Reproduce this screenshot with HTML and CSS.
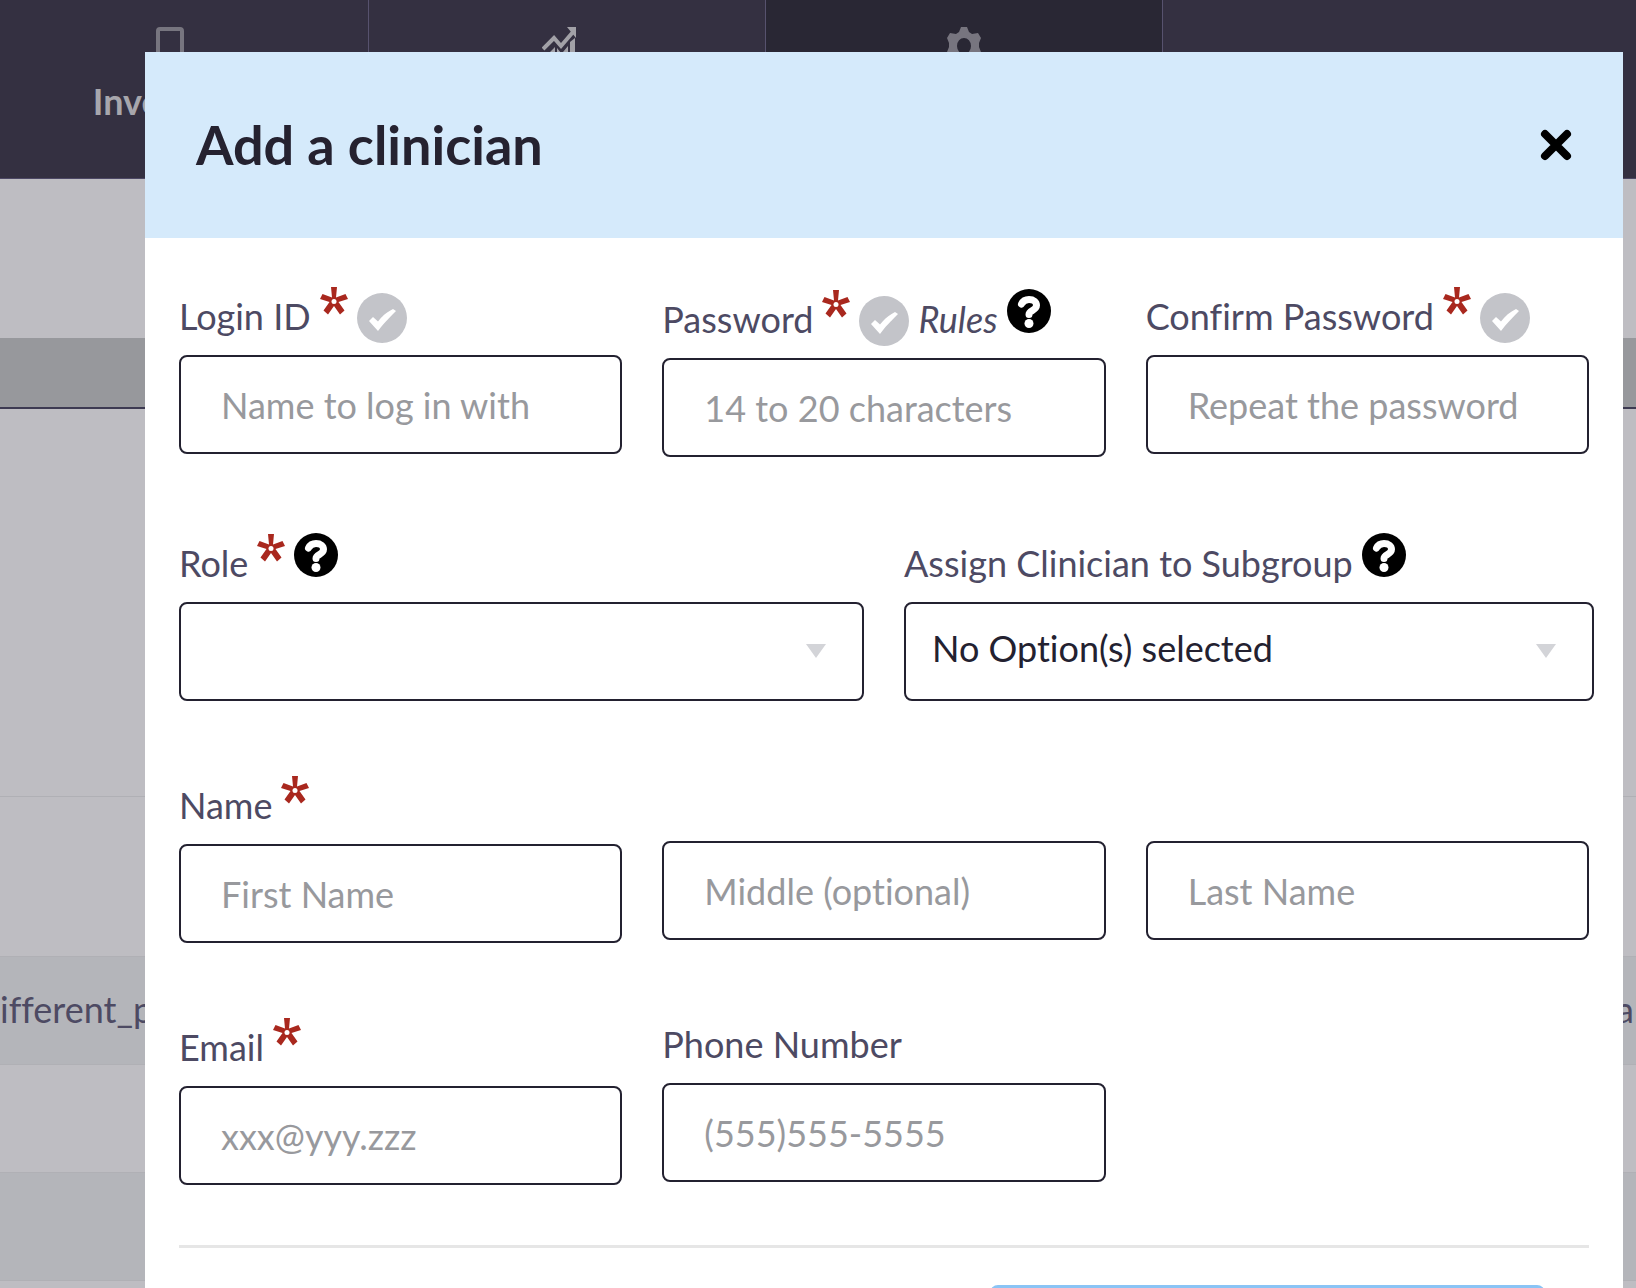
FILE: index.html
```html
<!DOCTYPE html>
<html lang="en">

<head>
    <meta charset="UTF-8" />
    <meta name="viewport" content="width=device-width, initial-scale=1.0" />
    <title>Add a clinician</title>
    <link rel="stylesheet" href="styles.css">
</head>

<body>
    <!-- Shared icons -->
    <svg class="sprite" aria-hidden="true">
        <symbol id="star" viewBox="0 0 28 28">
            <path fill="#a9281e" d="M11 0h6l-1 10.500 9.500-3.500L28 12l-9.500 3 6 8.500-4.500 4L14 19l-6 8.500-4.500-4 6-8.500L0 12l2.500-5L12 10.500z" />
            <circle cx="14" cy="14.500" r="2.500" fill="#fff" />
        </symbol>
        <symbol id="check" viewBox="0 0 50 50">
            <circle cx="25" cy="25" r="25" fill="#c3c4c9" />
            <path fill="#fff" d="M12 28l4-4 5 4.500C25 23 30 19 36 16l3 2C33 24 26 31 21 38z" />
        </symbol>
        <symbol id="help" viewBox="0 0 44 44">
            <circle cx="22" cy="22" r="22" fill="#000" />
            <path fill="none" stroke="#fff" stroke-width="7" stroke-linecap="round" stroke-linejoin="round" d="M14.500 15C16 12 19 10.500 22 10.500c4.500 0 7.500 2.500 7.500 5.800 0 5.200-7.500 5-7.500 9.200" />
            <circle cx="22" cy="34.500" r="4.500" fill="#fff" />
        </symbol>
    </svg>

    <nav class="top-nav">
        <a href="#" class="nav-item">
            <svg class="nav-icon" viewBox="0 0 34 40" aria-hidden="true">
                <rect x="5" y="2" width="24" height="36" rx="2" fill="none" stroke="#77757f" stroke-width="4" />
            </svg>
            <span>Inventory</span>
        </a>
        <a href="#" class="nav-item" aria-label="Reports">
            <svg class="nav-icon wide" viewBox="0 0 50 40" aria-hidden="true">
                <path fill="none" stroke="#a2a1a7" stroke-width="4" d="M1 22L12 11l7 8L31 5" />
                <path fill="#a2a1a7" d="M25 0h9v11zM8 25l5-5v20H8zM15 21l4 5v14h-4zM21 25l5-6v21h-5zM28 15l5-4v29h-5z" />
            </svg>
        </a>
        <a href="#" class="nav-item active" aria-label="Settings">
            <svg class="nav-icon" viewBox="0 0 34 40" aria-hidden="true">
                <path fill="#77757f" fill-rule="evenodd" d="M14 0h6l2 5 3 2 6-1 3 5-2 5v4l2 5-3 5-6-1-3 2-2 5h-6l-2-5-3-2-6 1-3-5 2-5v-4l-2-5 3-5 6 1 3-2zM17 11a7 8 0 1 0 0 16 7 8 0 0 0 0-16z" />
            </svg>
        </a>
    </nav>

    <table class="clinician-table">
        <thead>
            <tr><th></th><th></th></tr>
        </thead>
        <tbody>
            <tr class="row-large"><td></td><td></td></tr>
            <tr class="row-medium"><td></td><td></td></tr>
            <tr class="shaded"><td>ifferent_p</td><td>al</td></tr>
            <tr><td></td><td></td></tr>
            <tr class="shaded"><td></td><td></td></tr>
            <tr><td></td><td></td></tr>
        </tbody>
    </table>

    <div class="overlay">
        <div class="modal" role="dialog" aria-labelledby="modal-title">
            <header class="modal-header">
                <h1 id="modal-title">Add a clinician</h1>
                <button type="button" class="close-btn" aria-label="Close">
                    <svg viewBox="0 0 32 32" aria-hidden="true">
                        <path stroke="#000" stroke-width="8" stroke-linecap="round" d="M5 5l22 22M27 5L5 27" />
                    </svg>
                </button>
            </header>

            <form class="modal-body">
                <div class="form-row account-row">
                    <div class="field">
                        <div class="label-line">
                            <label for="login">Login ID</label>
                            <svg class="star"><use href="#star" /></svg>
                            <svg class="check"><use href="#check" /></svg>
                        </div>
                        <input type="text" id="login" placeholder="Name to log in with">
                    </div>
                    <div class="field">
                        <div class="label-line tall">
                            <label for="password">Password</label>
                            <svg class="star"><use href="#star" /></svg>
                            <svg class="check"><use href="#check" /></svg>
                            <em>Rules</em>
                            <svg class="help"><use href="#help" /></svg>
                        </div>
                        <input type="password" id="password" placeholder="14 to 20 characters">
                    </div>
                    <div class="field">
                        <div class="label-line">
                            <label for="confirm">Confirm Password</label>
                            <svg class="star"><use href="#star" /></svg>
                            <svg class="check"><use href="#check" /></svg>
                        </div>
                        <input type="password" id="confirm" placeholder="Repeat the password">
                    </div>
                </div>

                <div class="form-row select-row">
                    <div class="field">
                        <div class="label-line">
                            <label for="role">Role</label>
                            <svg class="star"><use href="#star" /></svg>
                            <svg class="help"><use href="#help" /></svg>
                        </div>
                        <div class="select-box">
                            <select id="role">
                                <option></option>
                            </select>
                            <svg class="arrow" viewBox="0 0 20 14" aria-hidden="true"><path d="M0 0h20L10 14z" /></svg>
                        </div>
                    </div>
                    <div class="field">
                        <div class="label-line">
                            <label for="subgroup">Assign Clinician to Subgroup</label>
                            <svg class="help"><use href="#help" /></svg>
                        </div>
                        <div class="select-box">
                            <select id="subgroup">
                                <option>No Option(s) selected</option>
                            </select>
                            <svg class="arrow" viewBox="0 0 20 14" aria-hidden="true"><path d="M0 0h20L10 14z" /></svg>
                        </div>
                    </div>
                </div>

                <div class="form-row">
                    <div class="field">
                        <div class="label-line tall">
                            <label for="first">Name</label>
                            <svg class="star"><use href="#star" /></svg>
                        </div>
                        <input type="text" id="first" placeholder="First Name">
                    </div>
                    <div class="field">
                        <div class="label-line"></div>
                        <input type="text" placeholder="Middle (optional)" aria-label="Middle name">
                    </div>
                    <div class="field">
                        <div class="label-line"></div>
                        <input type="text" placeholder="Last Name" aria-label="Last name">
                    </div>
                </div>

                <div class="form-row">
                    <div class="field">
                        <div class="label-line tall">
                            <label for="email">Email</label>
                            <svg class="star"><use href="#star" /></svg>
                        </div>
                        <input type="email" id="email" placeholder="xxx@yyy.zzz">
                    </div>
                    <div class="field">
                        <div class="label-line">
                            <label for="phone">Phone Number</label>
                        </div>
                        <input type="tel" id="phone" placeholder="(555)555-5555">
                    </div>
                </div>

                <div class="form-actions">
                    <button type="submit" class="submit-btn" aria-label="Save"></button>
                </div>
            </form>
        </div>
    </div>
</body>

</html>
```

FILE: styles.css
```css
* {
    box-sizing: border-box;
}

body {
    margin: 0;
    height: 100vh;
    overflow: hidden;
    background-color: #bebdc2;
    font-family: Lato, sans-serif;
    font-size: 36px;
    line-height: 44px;
    font-variant-ligatures: none;
    color: #4d4a63;
}

.sprite {
    position: absolute;
    width: 0;
    height: 0;
}

/* Top navigation, scrolled a little to the left */
.top-nav {
    display: flex;
    height: 179px;
    margin-left: -28px;
    background-color: #343041;
    border-bottom: 1px solid #4d4865;
}

.nav-item {
    display: flex;
    flex-direction: column;
    align-items: center;
    gap: 12px;
    width: 397px;
    padding-top: 27px;
    border-right: 1px solid #57526e;
    color: #a7a6ac;
    font-weight: bold;
    text-decoration: none;
}

.nav-item.active {
    background-color: #292734;
}

.nav-icon {
    width: 34px;
    height: 40px;
}

.nav-icon.wide {
    width: 50px;
}

/* Table behind the modal */
.clinician-table {
    width: 100%;
    margin-top: 159px;
    border-collapse: collapse;
    table-layout: fixed;
    white-space: nowrap;
}

.clinician-table th {
    height: 70px;
    background-color: #97989c;
    border-bottom: 2px solid #3d3a52;
}

.clinician-table th:last-child {
    width: 20px;
}

.clinician-table td {
    height: 108px;
    padding: 0 0 2px;
    border-bottom: 1px solid #b0b0b5;
}

.clinician-table .row-large td {
    height: 388px;
}

.clinician-table .row-medium td {
    height: 160px;
}

.clinician-table .shaded {
    background-color: #b4b5ba;
}

/* Modal */
.overlay {
    position: fixed;
    inset: 0;
    padding: 52px 13px 0 145px;
    overflow: hidden;
}

.modal {
    background-color: #fff;
}

.modal-header {
    display: flex;
    justify-content: space-between;
    align-items: center;
    height: 186px;
    padding: 0 51px;
    background-color: #d5eafb;
}

.modal-header h1 {
    margin: 0;
    font-size: 54px;
    line-height: 64px;
    color: #252230;
}

.close-btn {
    width: 32px;
    height: 32px;
    padding: 0;
    border: none;
    background: none;
    cursor: pointer;
}

.close-btn svg {
    display: block;
}

/* Form */
.modal-body {
    padding: 49px 34px 60px;
}

.form-row {
    display: grid;
    grid-template-columns: repeat(3, 1fr);
    gap: 40px;
    margin-bottom: 72px;
}

.account-row {
    margin-bottom: 77px;
}

.select-row {
    grid-template-columns: 685fr 690fr;
    margin-right: -5px;
}

.label-line {
    display: flex;
    align-items: flex-end;
    gap: 9px;
    height: 56px;
    margin-bottom: 12px;
}

.label-line.tall {
    height: 59px;
}

.label-line label,
.label-line em {
    padding-bottom: 5px;
}

.star {
    width: 28px;
    height: 28px;
    margin-bottom: 28px;
}

.check {
    width: 50px;
    height: 50px;
}

.help {
    width: 44px;
    height: 44px;
    margin-bottom: 13px;
}

input,
select {
    display: block;
    width: 100%;
    height: 99px;
    padding: 0 40px;
    border: 2px solid #232130;
    border-radius: 8px;
    background-color: #fff;
    font: inherit;
    font-variant-ligatures: none;
    color: #232130;
}

input::placeholder {
    color: #98999d;
    opacity: 1;
}

.select-box {
    position: relative;
}

select {
    appearance: none;
    padding: 0 60px 8px 26px;
}

.arrow {
    position: absolute;
    top: 42px;
    right: 38px;
    width: 20px;
    height: 14px;
    fill: #d3d4d8;
    pointer-events: none;
}

.form-actions {
    display: flex;
    justify-content: flex-end;
    margin-top: -12px;
    padding: 37px 44px 0 0;
    border-top: 3px solid #e6e6e6;
}

.submit-btn {
    width: 555px;
    height: 96px;
    border: none;
    border-radius: 8px;
    background-color: #8ac4f5;
    cursor: pointer;
}
```
